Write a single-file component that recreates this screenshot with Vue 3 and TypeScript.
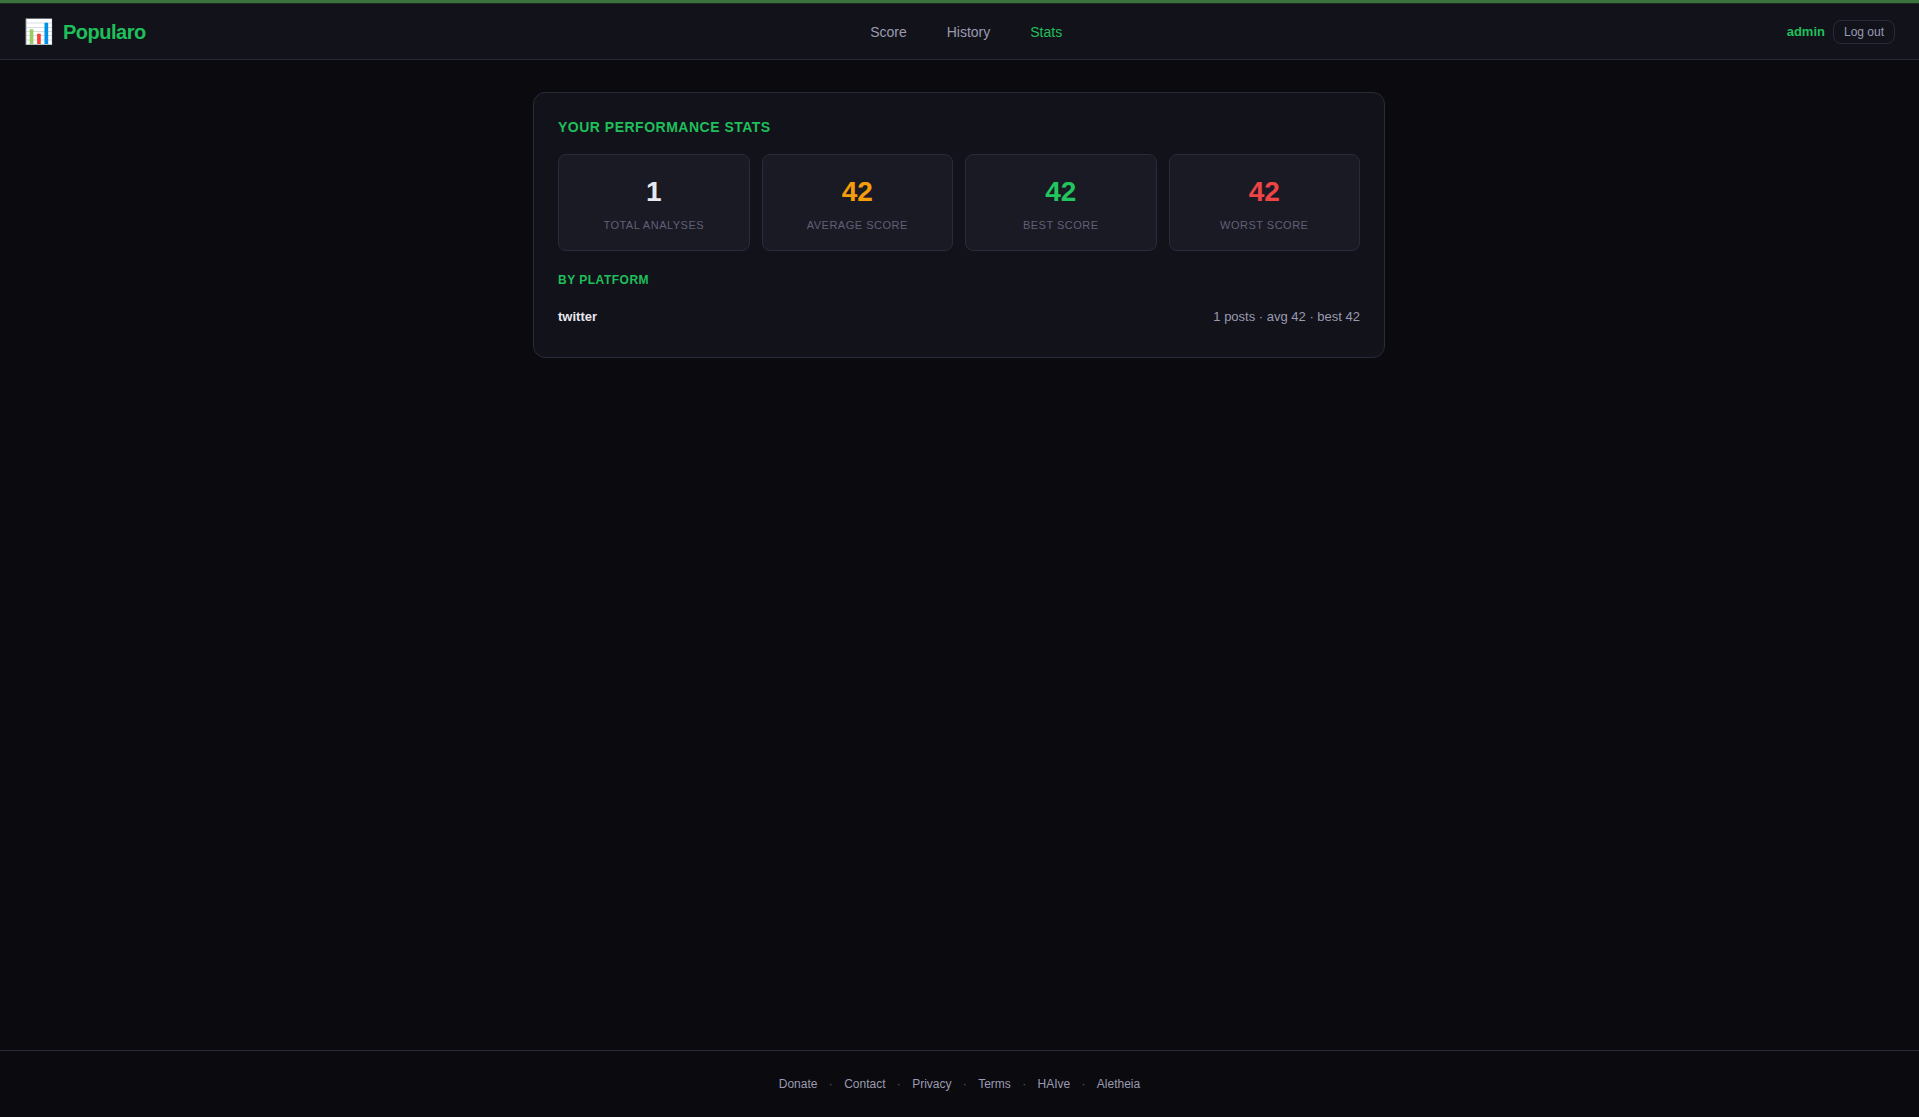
<script setup lang="ts">
interface Stat {
  label: string
  value: number
  tone: string
}

const navLinks = ['Score', 'History', 'Stats']
const activeLink = 'Stats'

const stats: Stat[] = [
  { label: 'Total analyses', value: 1, tone: 'white' },
  { label: 'Average score', value: 42, tone: 'amber' },
  { label: 'Best score', value: 42, tone: 'green' },
  { label: 'Worst score', value: 42, tone: 'red' }
]

const footerLinks = ['Donate', 'Contact', 'Privacy', 'Terms', 'HAIve', 'Aletheia']
</script>

<template>
  <div class="page">
    <div class="top-strip"></div>
    <header class="site-header">
      <a class="logo">
        <span class="logo-icon">📊</span>
        <span class="logo-text">Popularo</span>
      </a>
      <nav class="main-nav">
        <a v-for="link in navLinks" :key="link" :class="{ active: link === activeLink }">{{ link }}</a>
      </nav>
      <div class="user-box">
        <span class="username">admin</span>
        <button class="logout">Log out</button>
      </div>
    </header>

    <main class="content">
      <section class="card">
        <h2 class="card-title">Your performance stats</h2>
        <div class="stats-grid">
          <div v-for="s in stats" :key="s.label" class="stat-box">
            <div class="stat-value" :class="s.tone">{{ s.value }}</div>
            <div class="stat-label">{{ s.label }}</div>
          </div>
        </div>
        <h3 class="sub-title">By platform</h3>
        <div class="platform-row">
          <span class="platform-name">twitter</span>
          <span class="platform-meta">1 posts · avg 42 · best 42</span>
        </div>
      </section>
    </main>

    <footer class="site-footer">
      <template v-for="(link, i) in footerLinks" :key="link">
        <span v-if="i > 0" class="dot">·</span>
        <a>{{ link }}</a>
      </template>
    </footer>
  </div>
</template>

<style>
html,
body {
  margin: 0;
  background: #0a0a0f;
}
</style>

<style scoped>
.page {
  min-height: 1117px;
  display: flex;
  flex-direction: column;
  background: #0a0a0f;
  color: #e8e8f0;
  font-family: 'Liberation Sans', Arial, sans-serif;
  line-height: 1.5;
}

.top-strip {
  height: 4px;
  background: linear-gradient(#3b733d 0 3px, #1b2b22 3px);
}

.site-header {
  display: flex;
  align-items: center;
  justify-content: space-between;
  height: 54px;
  padding: 1px 24px 0;
  background: #12121a;
  border-bottom: 1px solid #2a2a3a;
}

.logo {
  display: flex;
  align-items: center;
  gap: 9px;
}

.logo-icon {
  font-size: 24px;
  line-height: 1;
}

.logo-text {
  font-size: 20px;
  font-weight: 700;
  letter-spacing: -0.5px;
  color: #1fbf5b;
}

.main-nav {
  display: flex;
  gap: 40px;
  font-size: 14px;
  color: #9a9ab0;
}

.main-nav .active {
  color: #1fbf5b;
}

.user-box {
  display: flex;
  align-items: center;
  gap: 8px;
}

.username {
  font-size: 13px;
  font-weight: 700;
  color: #1fbf5b;
}

.logout {
  padding: 4px 10px;
  font-family: inherit;
  font-size: 12px;
  color: #9a9ab0;
  background: transparent;
  border: 1px solid #2a2a3a;
  border-radius: 8px;
}

.content {
  flex: 1;
  box-sizing: border-box;
  width: 901px;
  margin: 0 auto;
  padding: 32px 25px 32px 24px;
}

.card {
  padding: 24px;
  background: #12121a;
  border: 1px solid #2a2a3a;
  border-radius: 12px;
}

.card-title {
  margin: 0 0 16px;
  font-size: 14px;
  font-weight: 700;
  letter-spacing: 0.5px;
  text-transform: uppercase;
  color: #1fbf5b;
}

.stats-grid {
  display: grid;
  grid-template-columns: repeat(4, 1fr);
  gap: 12px;
}

.stat-box {
  padding: 16px;
  text-align: center;
  background: #1a1a24;
  border: 1px solid #2a2a3a;
  border-radius: 8px;
}

.stat-value {
  font-size: 28px;
  font-weight: 700;
}

.stat-value.white {
  color: #e8e8f0;
}

.stat-value.amber {
  color: #f59e0b;
}

.stat-value.green {
  color: #22c55e;
}

.stat-value.red {
  color: #ef4444;
}

.stat-label {
  margin-top: 4px;
  font-size: 11px;
  letter-spacing: 0.5px;
  text-transform: uppercase;
  color: #606078;
}

.sub-title {
  margin: 20px 0 12px;
  font-size: 12px;
  font-weight: 700;
  letter-spacing: 0.5px;
  text-transform: uppercase;
  color: #1fbf5b;
}

.platform-row {
  display: flex;
  justify-content: space-between;
  align-items: center;
  padding: 6px 0 7px;
  font-size: 13px;
}

.platform-name {
  font-weight: 700;
  color: #e8e8f0;
}

.platform-meta {
  color: #9a9ab0;
}

.site-footer {
  display: flex;
  justify-content: center;
  align-items: center;
  gap: 11.33px;
  padding: 24px 0;
  font-size: 12px;
  color: #9a9ab0;
  border-top: 1px solid #2a2a3a;
}

.dot {
  color: #5a5a70;
}
</style>
